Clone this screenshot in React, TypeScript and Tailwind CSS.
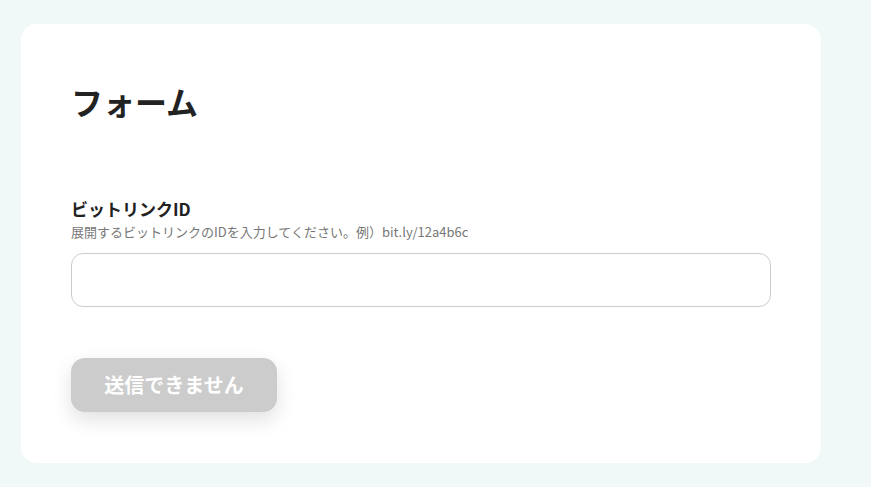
export default function App() {
  return (
    <div
      className="min-h-[487px] bg-[#f1f9f8] pl-[21px] pt-[24px] pb-[25px]"
      style={{ fontFamily: '"Noto Sans CJK JP", "Noto Sans", sans-serif' }}
    >
      <div className="w-[800px] rounded-[16px] bg-white px-[50px] pt-[50px] pb-[51px]">
        <h1 className="text-[32px] font-bold leading-[54px] text-[#222222]">フォーム</h1>

        <div className="mt-[68px]">
          <label htmlFor="bitlink" className="block text-[17px] font-bold leading-[25px] text-[#222222]">
            ビットリンクID
          </label>
          <p className="mt-[1px] text-[13px] leading-[20px] text-[#777777]">
            展開するビットリンクのIDを入力してください。例）bit.ly/12a4b6c
          </p>
          <input
            id="bitlink"
            type="text"
            className="mt-[11px] block h-[54px] w-[700px] rounded-[12px] border border-[#cccccc] bg-white px-4 text-[16px] outline-none"
          />
        </div>

        <button
          type="button"
          disabled
          className="mt-[51px] h-[54px] w-[206px] rounded-[14px] bg-[#cccccc] text-[20px] font-bold text-white shadow-[0_8px_20px_rgba(0,0,0,0.12)]"
        >
          送信できません
        </button>
      </div>
    </div>
  );
}
